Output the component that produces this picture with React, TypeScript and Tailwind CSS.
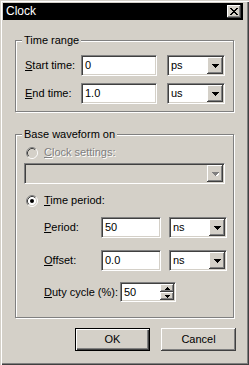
import React from "react";

const sunken =
  "border border-t-[#808080] border-l-[#808080] border-b-white border-r-white shadow-[inset_1px_1px_0_#404040,inset_-1px_-1px_0_#d4d0c8]";
const raised =
  "bg-[#d4d0c8] shadow-[inset_-1px_-1px_0_#404040,inset_1px_1px_0_#fff,inset_-2px_-2px_0_#808080]";
const etched = "border border-[#808080] shadow-[inset_1px_1px_0_#fff,1px_1px_0_#fff]";

function U({ ch }: { ch: string }) {
  return <span className="underline underline-offset-[1px]">{ch}</span>;
}

function Arrow({ disabled, up }: { disabled?: boolean; up?: boolean }) {
  return (
    <svg width="7" height="4" viewBox="0 0 7 4" shapeRendering="crispEdges" className={up ? "rotate-180" : ""}>
      {disabled && <path d="M1 1h7v1h-1v1h-1v1h-1v1h-1v-1h-1v-1h-1v-1h-1z" fill="#fff" />}
      <path d="M0 0h7v1h-1v1h-1v1h-1v1h-1v-1h-1v-1h-1v-1h-1z" fill={disabled ? "#808080" : "#000"} />
    </svg>
  );
}

function SmallArrow({ up }: { up?: boolean }) {
  return (
    <svg width="5" height="3" viewBox="0 0 5 3" shapeRendering="crispEdges" className={up ? "rotate-180" : ""}>
      <path d="M0 0h5v1h-1v1h-1v1h-1v-1h-1v-1h-1z" fill="#000" />
    </svg>
  );
}

function TextBox({ value, className }: { value: string; className: string }) {
  return (
    <div className={`h-[21px] bg-white ${sunken} ${className} flex items-center pl-[3px]`}>
      <span>{value}</span>
    </div>
  );
}

function Combo({ value, className, disabled }: { value?: string; className: string; disabled?: boolean }) {
  return (
    <div className={`h-[21px] flex p-[1px] ${sunken} ${disabled ? "bg-[#d4d0c8]" : "bg-white"} ${className}`}>
      <div className="flex-1 flex items-center pl-[2px]">{value}</div>
      <div className={`w-[16px] h-full flex items-center justify-center ${raised}`}>
        <Arrow disabled={disabled} />
      </div>
    </div>
  );
}

function Radio({ checked, disabled }: { checked?: boolean; disabled?: boolean }) {
  return (
    <svg width="12" height="12" viewBox="0 0 12 12">
      <circle cx="6" cy="6" r="4.5" fill={disabled ? "#d4d0c8" : "#fff"} />
      <path d="M2.11 9.89A5.5 5.5 0 0 1 9.89 2.11" stroke="#808080" fill="none" />
      <path d="M9.89 2.11A5.5 5.5 0 0 1 2.11 9.89" stroke="#fff" fill="none" />
      <path d="M2.82 9.18A4.5 4.5 0 0 1 9.18 2.82" stroke="#404040" fill="none" />
      <path d="M9.18 2.82A4.5 4.5 0 0 1 2.82 9.18" stroke="#d4d0c8" fill="none" />
      {checked && <circle cx="6" cy="6" r="2" fill="#000" />}
    </svg>
  );
}

export default function App() {
  return (
    <div className="w-[249px] h-[365px] bg-[#d4d0c8] pl-[3px] pt-[3px] pr-[6px] pb-[3px] flex flex-col font-['Liberation_Sans',Arial,sans-serif] text-[11px] leading-[13px] text-black shadow-[inset_1px_1px_0_#d4d0c8,inset_2px_2px_0_#fff,inset_-1px_-1px_0_#404040,inset_-2px_-2px_0_#808080]">
      <div className="h-[17px] bg-black flex items-center justify-between pl-[3px] pr-[2px]">
        <span className="text-white text-[12px]">Clock</span>
        <div className={`w-[14px] h-[13px] flex items-center justify-center ${raised}`}>
          <svg width="8" height="7" viewBox="0 0 8 7" shapeRendering="crispEdges">
            <path d="M0 0h2v1h1v1h2v-1h1v-1h2v1h-1v1h-1v1h-1v1h1v1h1v1h1v1h-2v-1h-1v-1h-2v1h-1v1h-2v-1h1v-1h1v-1h1v-1h-1v-1h-1v-1h-1z" fill="#000" />
          </svg>
        </div>
      </div>

      <div className={`relative mt-[20px] ml-[12px] w-[219px] pt-[14px] pb-[7px] pl-[9px] ${etched}`}>
        <span className="absolute -top-[7px] left-[6px] px-[2px] bg-[#d4d0c8]">Time range</span>
        <div className="flex items-center">
          <span className="w-[56px]">
            <U ch="S" />tart time:
          </span>
          <TextBox value="0" className="w-[76px]" />
          <Combo value="ps" className="w-[58px] ml-[10px]" />
        </div>
        <div className="flex items-center mt-[7px]">
          <span className="w-[56px]">
            <U ch="E" />nd time:
          </span>
          <TextBox value="1.0" className="w-[76px]" />
          <Combo value="us" className="w-[58px] ml-[10px]" />
        </div>
      </div>

      <div className={`relative mt-[22px] ml-[12px] w-[219px] pt-[11px] pb-[15px] pl-[8px] ${etched}`}>
        <span className="absolute -top-[7px] left-[6px] px-[2px] bg-[#d4d0c8]">Base waveform on</span>
        <div className="h-[13px] flex items-center pl-[2px] text-[#808080] [text-shadow:1px_1px_0_#fff]">
          <Radio disabled />
          <span className="ml-[6px]">
            <U ch="C" />lock settings:
          </span>
        </div>
        <Combo disabled className="w-[201px] mt-[4px]" />
        <div className="h-[13px] flex items-center pl-[2px] mt-[10px]">
          <Radio checked />
          <span className="ml-[6px]">
            <U ch="T" />ime period:
          </span>
        </div>
        <div className="flex items-center mt-[10px] pl-[20px]">
          <span className="w-[57px]">
            <U ch="P" />eriod:
          </span>
          <TextBox value="50" className="w-[60px]" />
          <Combo value="ns" className="w-[58px] ml-[8px]" />
        </div>
        <div className="flex items-center mt-[12px] pl-[20px]">
          <span className="w-[57px]">
            <U ch="O" />ffset:
          </span>
          <TextBox value="0.0" className="w-[60px]" />
          <Combo value="ns" className="w-[58px] ml-[8px]" />
        </div>
        <div className="flex items-center mt-[11px] pl-[20px]">
          <span className="w-[76px]">
            <U ch="D" />uty cycle (%):
          </span>
          <div className={`w-[56px] h-[20px] flex p-[1px] bg-white ${sunken}`}>
            <div className="flex-1 flex items-center pl-[2px]">50</div>
            <div className="w-[14px] flex flex-col">
              <div className={`flex-1 flex items-center justify-center ${raised}`}>
                <SmallArrow up />
              </div>
              <div className={`flex-1 flex items-center justify-center ${raised}`}>
                <SmallArrow />
              </div>
            </div>
          </div>
        </div>
      </div>

      <div className="flex justify-end gap-[11px] mt-[10px] pr-[7px]">
        <button className="w-[75px] h-[23px] border border-black bg-[#d4d0c8] shadow-[inset_1px_1px_0_#fff,inset_-1px_-1px_0_#404040,inset_-2px_-2px_0_#808080]">
          OK
        </button>
        <button className={`w-[75px] h-[23px] ${raised}`}>Cancel</button>
      </div>
    </div>
  );
}
